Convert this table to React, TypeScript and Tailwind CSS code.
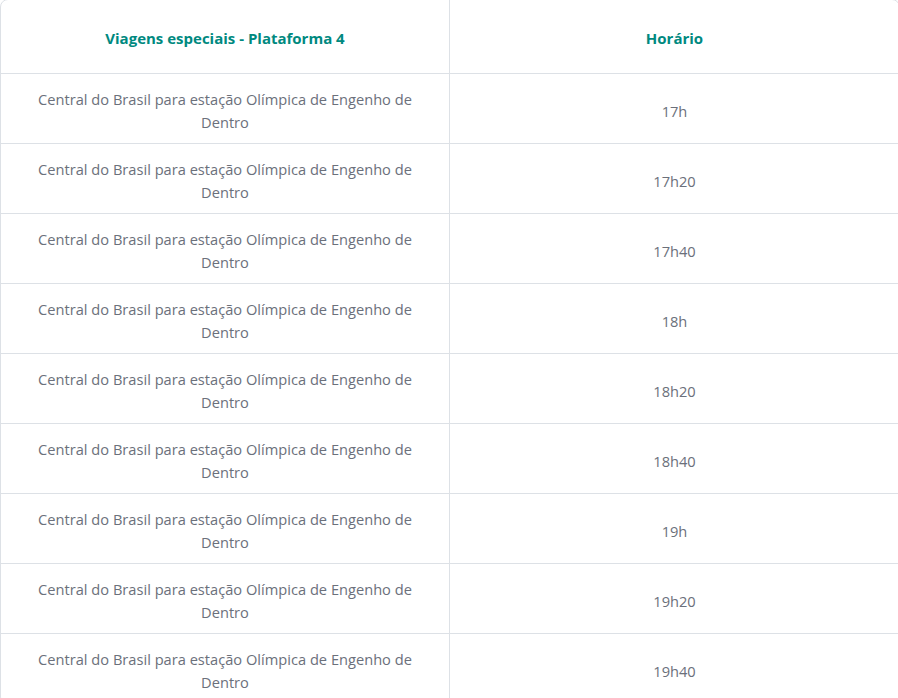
const rows = ['17h', '17h20', '17h40', '18h', '18h20', '18h40', '19h', '19h20', '19h40']

export default function App() {
  return (
    <div className="bg-white min-h-screen overflow-hidden" style={{ fontFamily: '"Open Sans", "Noto Sans", sans-serif' }}>
      <div className="w-[900px] -mt-px border border-[#dde1e6] rounded-lg">
        <div className="grid grid-cols-2 h-[74px] border-b border-[#dde1e6]">
          <div className="flex items-center justify-center pt-[3px] border-r border-[#dde1e6] text-[15px] font-bold text-[#00897f]">
            Viagens especiais - Plataforma 4
          </div>
          <div className="flex items-center justify-center pt-[3px] text-[15px] font-bold text-[#00897f]">
            Horário
          </div>
        </div>
        {rows.map((time) => (
          <div key={time} className="grid grid-cols-2 h-[70px] border-b border-[#dde1e6]">
            <div className="flex items-center justify-center pt-[5px] px-8 border-r border-[#dde1e6] text-center text-[14.65px] leading-[23px] text-[#6b707b]">
              Central do Brasil para estação Olímpica de Engenho de Dentro
            </div>
            <div className="flex items-center justify-center pt-[7px] text-[14.65px] text-[#6b707b]">
              {time}
            </div>
          </div>
        ))}
      </div>
    </div>
  )
}
